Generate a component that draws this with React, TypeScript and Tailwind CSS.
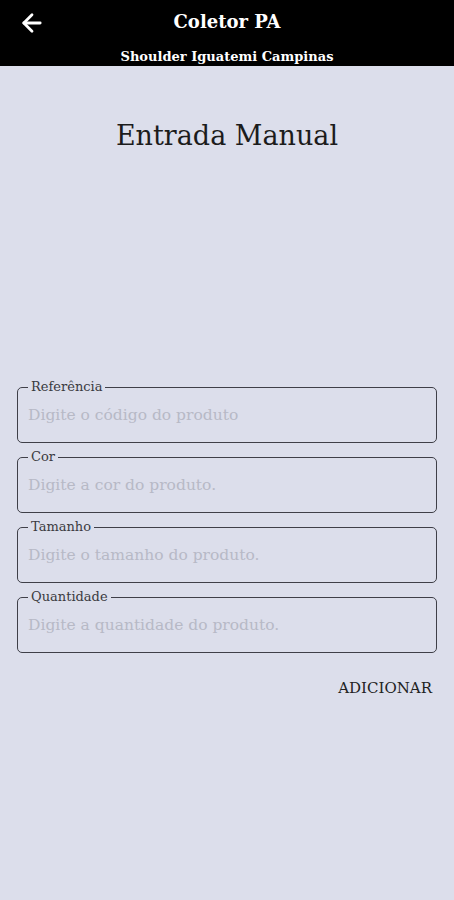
import { ArrowLeft } from "lucide-react"

const fields = [
  { label: "Referência", placeholder: "Digite o código do produto" },
  { label: "Cor", placeholder: "Digite a cor do produto." },
  { label: "Tamanho", placeholder: "Digite o tamanho do produto." },
  { label: "Quantidade", placeholder: "Digite a quantidade do produto." },
]

const font = { fontFamily: '"DejaVu Serif", "Liberation Serif", serif' }

export default function App() {
  return (
    <div className="min-h-[900px] w-full bg-[#dcdeeb]" style={font}>
      <header className="relative h-[66px] bg-black text-white">
        <button className="absolute left-[18px] top-[9px] p-0" aria-label="Voltar">
          <ArrowLeft className="h-[28px] w-[28px]" strokeWidth={2.4} />
        </button>
        <div className="flex flex-col items-center">
          <h1 className="mt-[8px] text-[18px] font-bold leading-[28px]">Coletor PA</h1>
          <p className="mt-[13px] text-[13px] font-bold leading-[16px]">Shoulder Iguatemi Campinas</p>
        </div>
      </header>

      <h2 className="mt-[50px] text-center text-[27px] leading-[40px] text-[#1c1c1c]">Entrada Manual</h2>

      <form className="mt-[224px] flex flex-col gap-[7px] px-[17px]">
        {fields.map((f) => (
          <fieldset
            key={f.label}
            className="rounded-[5px] border-[1.5px] border-[#3f3f48] px-[10px] pb-[6px]"
          >
            <legend className="px-[3px] text-[13px] leading-[14px] text-[#3a3a40]">{f.label}</legend>
            <input
              className="h-[42px] w-full bg-transparent text-[15.5px] text-[#333] outline-none placeholder:text-[#b7b9c6]"
              placeholder={f.placeholder}
              style={font}
            />
          </fieldset>
        ))}
      </form>

      <div className="mt-[24px] flex justify-end px-[22px]">
        <button className="text-[15px] uppercase text-[#222]" style={font}>
          Adicionar
        </button>
      </div>
    </div>
  )
}
